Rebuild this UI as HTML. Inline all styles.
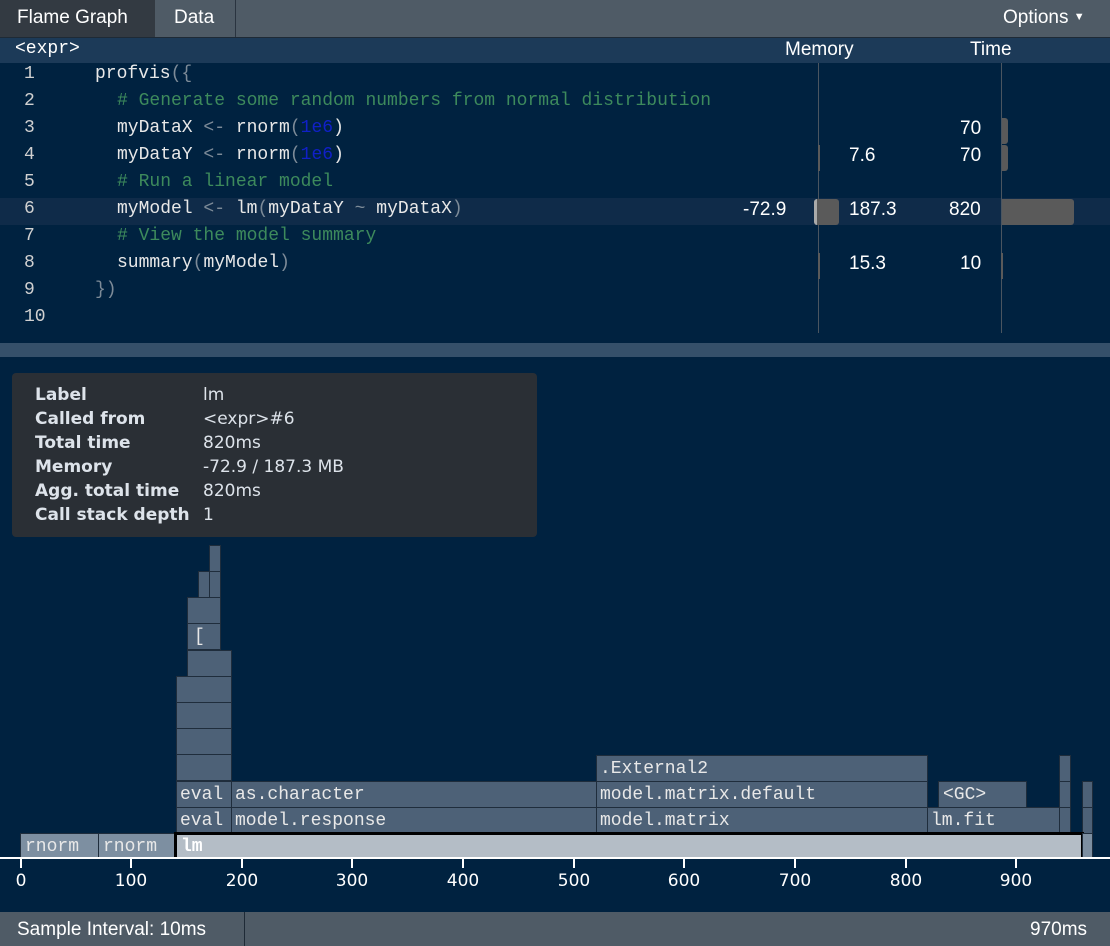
<!DOCTYPE html>
<html><head><meta charset="utf-8"><style>
*{margin:0;padding:0;box-sizing:border-box}
body{width:1110px;height:946px;background:#002240;position:relative;overflow:hidden;font-family:"Liberation Sans",sans-serif;color:#fff}
.a{position:absolute}
.mono{font-family:"Liberation Mono",monospace}
.tabbar{left:0;top:0;width:1110px;height:38px;background:#4f5b66;border-bottom:1px solid #1e2a36}
.code{font-size:18px;white-space:pre;color:#e8e8e8}
.ln{color:#d0d0d0;left:24px;font-family:"Liberation Mono",monospace;font-size:18px}
.c{color:#3d8a5c}.p{color:#7d8b98}.n{color:#1020c8}
.num{font-size:19px;color:#fff}
.b{position:absolute;background:#4d6177;border:1px solid #1f2d3c;height:27px;font-family:"Liberation Mono",monospace;font-size:18px;color:#e8e8e8;padding:3px 0 0 3px;white-space:nowrap;overflow:hidden;line-height:20px}
.tip{left:12px;top:373px;width:525px;height:164px;background:#2a2f35;border-radius:4px;font-family:"DejaVu Sans",sans-serif;font-size:17px;color:#dde3ea;line-height:24px}
.tick{position:absolute;top:858px;width:2px;height:10px;background:#fff}
.tl{position:absolute;top:871px;font-size:17px;width:60px;text-align:center;color:#fff;font-family:"DejaVu Sans",sans-serif}
</style></head><body>
<div class="a tabbar"></div>
<div class="a" style="left:0;top:0;width:155px;height:37px;background:#333a42;font-size:19px;padding:7px 0 0 17px">Flame Graph</div>
<div class="a" style="left:155px;top:0;width:81px;height:37px;border-right:1px solid #2a3440;font-size:19px;padding:7px 0 0 19px">Data</div>
<div class="a" style="left:1003px;top:7px;font-size:19px">Options <span style="font-size:11px;vertical-align:3px">▼</span></div>

<div class="a" style="left:0;top:38px;width:1110px;height:25px;background:#1c3a58"></div>
<div class="a mono" style="left:15px;top:39px;font-size:18px">&lt;expr&gt;</div>
<div class="a" style="left:785px;top:39px;font-size:19px">Memory</div>
<div class="a" style="left:970px;top:39px;font-size:19px">Time</div>

<div class="a" style="left:0;top:198px;width:1110px;height:27px;background:#0f2b49"></div>
<div class="a" style="left:818px;top:63px;width:1px;height:270px;background:#4a5560"></div>
<div class="a" style="left:1001px;top:63px;width:1px;height:270px;background:#4a5560"></div>

<div class="a ln" style="top:64px">1</div>
<div class="a ln" style="top:91px">2</div>
<div class="a ln" style="top:118px">3</div>
<div class="a ln" style="top:145px">4</div>
<div class="a ln" style="top:172px">5</div>
<div class="a ln" style="top:199px">6</div>
<div class="a ln" style="top:226px">7</div>
<div class="a ln" style="top:253px">8</div>
<div class="a ln" style="top:280px">9</div>
<div class="a ln" style="top:307px">10</div>

<div class="a code mono" style="left:95px;top:64px">profvis<span class="p">({</span></div>
<div class="a code mono" style="left:117px;top:91px"><span class="c"># Generate some random numbers from normal distribution</span></div>
<div class="a code mono" style="left:117px;top:118px">myDataX <span class="p">&lt;-</span> rnorm<span class="p">(</span><span class="n">1e6</span>)</div>
<div class="a code mono" style="left:117px;top:145px">myDataY <span class="p">&lt;-</span> rnorm<span class="p">(</span><span class="n">1e6</span>)</div>
<div class="a code mono" style="left:117px;top:172px"><span class="c"># Run a linear model</span></div>
<div class="a code mono" style="left:117px;top:199px">myModel <span class="p">&lt;-</span> lm<span class="p">(</span>myDataY <span class="p">~</span> myDataX<span class="p">)</span></div>
<div class="a code mono" style="left:117px;top:226px"><span class="c"># View the model summary</span></div>
<div class="a code mono" style="left:117px;top:253px">summary<span class="p">(</span>myModel<span class="p">)</span></div>
<div class="a code mono" style="left:95px;top:280px"><span class="p">})</span></div>

<div class="a num" style="left:960px;top:118px">70</div>
<div class="a" style="left:1002px;top:118px;width:6px;height:26px;background:#5a5a5a;border-radius:0 3px 3px 0"></div>
<div class="a num" style="left:849px;top:145px">7.6</div>
<div class="a num" style="left:960px;top:145px">70</div>
<div class="a" style="left:818px;top:145px;width:2px;height:26px;background:#5a5a5a"></div>
<div class="a" style="left:1002px;top:145px;width:6px;height:26px;background:#5a5a5a;border-radius:0 3px 3px 0"></div>
<div class="a num" style="left:743px;top:199px">-72.9</div>
<div class="a" style="left:814px;top:199px;width:25px;height:26px;background:#5a5a5a;border-left:3px solid #aaa;border-radius:3px"></div>
<div class="a num" style="left:849px;top:199px">187.3</div>
<div class="a num" style="left:949px;top:199px">820</div>
<div class="a" style="left:1002px;top:199px;width:72px;height:26px;background:#5a5a5a;border-radius:0 3px 3px 0"></div>
<div class="a num" style="left:849px;top:253px">15.3</div>
<div class="a num" style="left:960px;top:253px">10</div>
<div class="a" style="left:818px;top:253px;width:2px;height:26px;background:#5a5a5a"></div>
<div class="a" style="left:1001px;top:253px;width:2px;height:26px;background:#5a5a5a"></div>

<div class="a" style="left:0;top:343px;width:1110px;height:14px;background:#35506a"></div>

<!-- flame -->
<div class="b" style="left:209px;top:545px;width:12px"></div>
<div class="b" style="left:198px;top:571px;width:12px"></div>
<div class="b" style="left:209px;top:571px;width:12px"></div>
<div class="b" style="left:187px;top:597px;width:34px"></div>
<div class="b" style="left:187px;top:623px;width:34px;padding-left:6px">[</div>
<div class="b" style="left:187px;top:650px;width:45px"></div>
<div class="b" style="left:176px;top:676px;width:56px"></div>
<div class="b" style="left:176px;top:702px;width:56px"></div>
<div class="b" style="left:176px;top:728px;width:56px"></div>
<div class="b" style="left:176px;top:754px;width:56px"></div>
<div class="b" style="left:596px;top:755px;width:332px">.External2</div>
<div class="b" style="left:1059px;top:755px;width:12px"></div>
<div class="b" style="left:176px;top:781px;width:56px">eval</div>
<div class="b" style="left:231px;top:781px;width:366px">as.character</div>
<div class="b" style="left:596px;top:781px;width:332px">model.matrix.default</div>
<div class="b" style="left:938px;top:781px;width:89px;padding-left:4px">&lt;GC&gt;</div>
<div class="b" style="left:1059px;top:781px;width:12px"></div>
<div class="b" style="left:1082px;top:781px;width:11px"></div>
<div class="b" style="left:176px;top:807px;width:56px">eval</div>
<div class="b" style="left:231px;top:807px;width:366px">model.response</div>
<div class="b" style="left:596px;top:807px;width:332px">model.matrix</div>
<div class="b" style="left:927px;top:807px;width:133px">lm.fit</div>
<div class="b" style="left:1059px;top:807px;width:12px"></div>
<div class="b" style="left:1082px;top:807px;width:11px"></div>
<div class="b" style="left:20px;top:833px;width:79px;height:26px;background:#7d8fa1;padding-left:4px">rnorm</div>
<div class="b" style="left:98px;top:833px;width:78px;height:26px;background:#7d8fa1;padding-left:4px">rnorm</div>
<div class="b" style="left:174px;top:832px;width:910px;height:27px;background:#b4bdc6;border:3px solid #000;border-bottom:none;font-weight:bold;color:#fff;padding:2px 0 0 4px">lm</div>
<div class="b" style="left:1082px;top:833px;width:11px;height:26px;background:#7d8fa1"></div>

<div class="a" style="left:0;top:857px;width:1110px;height:2px;background:#fff"></div>
<div class="tick" style="left:20px"></div><div class="tl" style="left:-9px">0</div>
<div class="tick" style="left:130px"></div><div class="tl" style="left:101px">100</div>
<div class="tick" style="left:241px"></div><div class="tl" style="left:212px">200</div>
<div class="tick" style="left:351px"></div><div class="tl" style="left:322px">300</div>
<div class="tick" style="left:462px"></div><div class="tl" style="left:433px">400</div>
<div class="tick" style="left:573px"></div><div class="tl" style="left:544px">500</div>
<div class="tick" style="left:683px"></div><div class="tl" style="left:654px">600</div>
<div class="tick" style="left:794px"></div><div class="tl" style="left:765px">700</div>
<div class="tick" style="left:905px"></div><div class="tl" style="left:876px">800</div>
<div class="tick" style="left:1015px"></div><div class="tl" style="left:986px">900</div>

<div class="a tip">
<div class="a" style="left:23px;top:10px;font-weight:bold">Label<br>Called from<br>Total time<br>Memory<br>Agg. total time<br>Call stack depth</div>
<div class="a" style="left:191px;top:10px">lm<br>&lt;expr&gt;#6<br>820ms<br>-72.9 / 187.3 MB<br>820ms<br>1</div>
</div>

<div class="a" style="left:0;top:912px;width:1110px;height:34px;background:#4f5b66"></div>
<div class="a" style="left:244px;top:912px;width:1px;height:34px;background:#1e2a36"></div>
<div class="a" style="left:17px;top:919px;font-size:19px">Sample Interval: 10ms</div>
<div class="a" style="left:1030px;top:919px;font-size:19px">970ms</div>
</body></html>
